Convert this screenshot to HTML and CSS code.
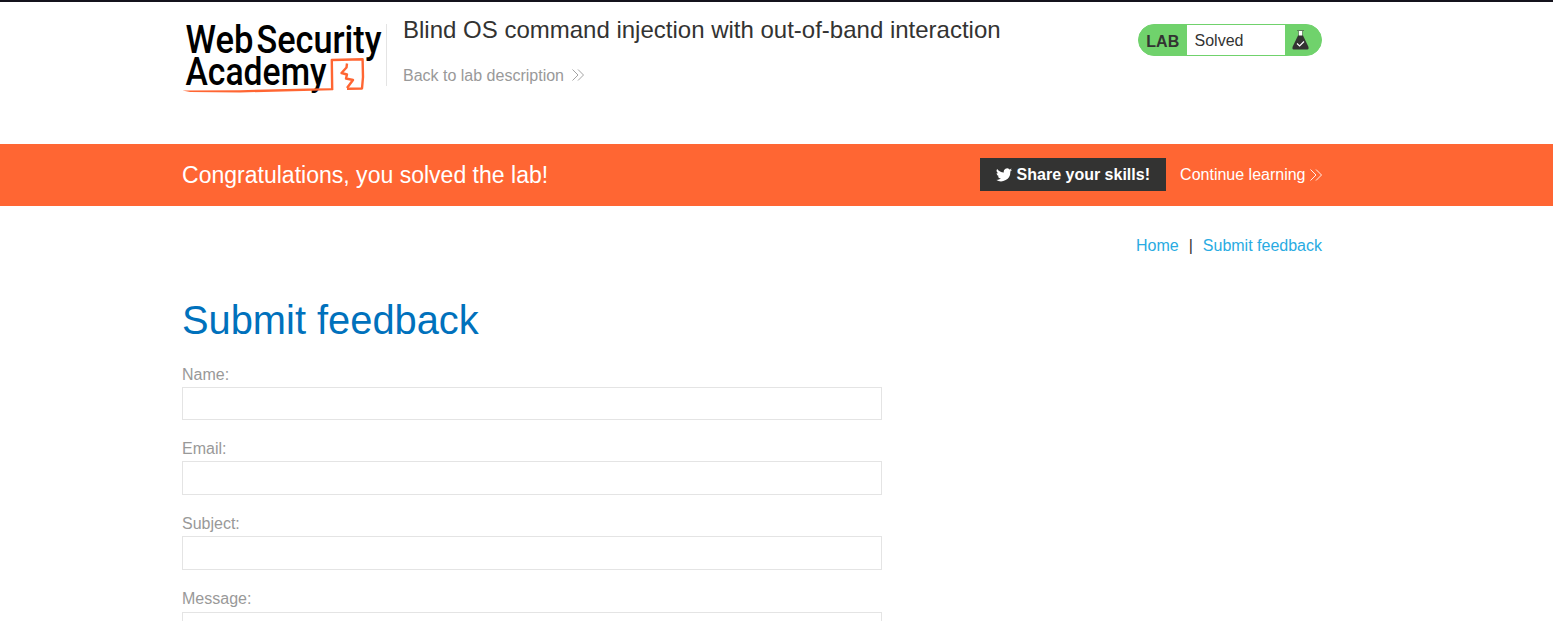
FILE: index.html
```
<!DOCTYPE html>
<html lang="en">
<head>
<meta charset="utf-8">
<title>Blind OS command injection with out-of-band interaction</title>
<link rel="stylesheet" href="styles.css">
</head>
<body>
<header class="lab-header">
  <div class="container header-row">
    <svg class="logo" width="204" height="80" viewBox="182 20 204 80">
      <g class="logo-text">
        <text x="185.500" y="52.800" textLength="68" lengthAdjust="spacingAndGlyphs">Web</text>
        <text x="256.500" y="52.800" textLength="125" lengthAdjust="spacingAndGlyphs">Security</text>
        <text x="185.500" y="85.300" textLength="141" lengthAdjust="spacingAndGlyphs">Academy</text>
      </g>
      <g fill="none" stroke="#ff6633" stroke-linejoin="round">
        <path stroke-width="2.400" d="M332.200 90L331.800 60L362.600 59.300L363 77L362 88.500L347 88.700"/>
        <path stroke-width="2.400" d="M347 63.500L346.500 67.500L341.500 73L347 74.500L346 78.500L353 80L347 88"/>
      </g>
      <path fill="#ff6633" d="M182.500 90.500L240 90.200L308 88.600L333 88.300V90.300L240 92.500L190 92Z"/>
    </svg>
    <div class="title-block">
      <h2>Blind OS command injection with out-of-band interaction</h2>
      <a class="back">Back to lab description
        <svg width="12" height="12" viewBox="0 0 12 12"><path d="M.5.500L6 6L.5 11.500M6 .5L11.500 6L6 11.500"/></svg>
      </a>
    </div>
    <div class="lab-status">
      <span class="lab-tag">LAB</span>
      <span class="lab-state">Solved</span>
      <svg class="flask" width="18" height="22" viewBox="0 0 18 22">
        <path fill="#fff" d="M6.500 2h4v5h-4z"/>
        <path fill="#5c805a" d="M5 1h7v1H5zM6 2h.8v5H6zM10.200 2h.8v5h-.8z"/>
        <path fill="#333332" d="M6 6.500h5L16.500 18q.5 2.500-1 2.500h-14Q0 20.500.500 18Z"/>
        <path fill="none" stroke="#fff" stroke-width="1.200" d="M5 14.500L7.600 17L12 12.500"/>
      </svg>
    </div>
  </div>
</header>
<section class="banner">
  <div class="container banner-row">
    <h4>Congratulations, you solved the lab!</h4>
    <div class="banner-actions">
      <a class="share">
        <svg width="16" height="14" viewBox="0 0 24 20"><path fill="#fff" d="M24 2.300a9.800 9.800 0 0 1-2.800.8A5 5 0 0 0 23.300.4a10 10 0 0 1-3.100 1.200 4.900 4.900 0 0 0-8.400 4.500A14 14 0 0 1 1.700.9a4.900 4.900 0 0 0 1.500 6.600 4.900 4.900 0 0 1-2.200-.6 4.900 4.900 0 0 0 4 4.900 5 5 0 0 1-2.300.1 4.900 4.900 0 0 0 4.600 3.400A9.900 9.900 0 0 1 0 17.300 14 14 0 0 0 21.500 4.800 10 10 0 0 0 24 2.300Z"/></svg>
        <span>Share your skills!</span>
      </a>
      <a class="continue">Continue learning
        <svg width="12" height="12" viewBox="0 0 12 12"><path d="M.5.500L6 6L.5 11.500M6 .5L11.500 6L6 11.500"/></svg>
      </a>
    </div>
  </div>
</section>
<main class="container">
  <nav class="top-links"><a>Home</a><span>|</span><a>Submit feedback</a></nav>
  <h1>Submit feedback</h1>
  <form class="feedback">
    <label>Name:</label><input class="short" type="text">
    <label>Email:</label><input type="text">
    <label>Subject:</label><input type="text">
    <label class="message-label">Message:</label><textarea></textarea>
  </form>
</main>
</body>
</html>
```
FILE: styles.css
```
* { box-sizing: border-box; }
body {
  margin: 0;
  background: #fff;
  color: #333332;
  font: 16px/20px "Liberation Sans", Arial, sans-serif;
}
h1, h2, h4 { margin: 0; font-weight: 400; }
.container { width: 1140px; margin-left: 182px; }
.lab-header { height: 144px; border-top: 2px solid #14131c; }
.header-row { display: flex; align-items: flex-start; }
.logo { flex: none; margin-top: 18px; overflow: visible; }
.logo-text { font: 500 38px Roboto, sans-serif; fill: #000; }
.title-block {
  height: 62px;
  margin-top: 22px;
  padding-left: 16px;
  border-left: 1px solid #e4e4e4;
}
.title-block h2 { margin-top: -10px; font-size: 24px; line-height: 32px; white-space: nowrap; }
.back { display: flex; align-items: center; gap: 8.5px; margin-top: 20px; color: #999; }
.back svg, .continue svg { fill: none; stroke: currentColor; stroke-width: .9; }
.back svg { margin-top: -2px; }
.lab-status {
  display: flex;
  width: 184px;
  height: 32px;
  margin: 22px 0 0 auto;
  border: 1px solid #70d26c;
  border-radius: 16px;
  background: #70d26c;
  overflow: hidden;
}
.lab-tag { width: 48px; padding-left: 7.3px; font-weight: 700; line-height: 33px; }
.lab-state { width: 98px; padding-left: 7.5px; background: #fff; line-height: 31px; }
.flask { margin: 4px 0 0 6.5px; }
.banner { height: 62px; background: #ff6633; color: #fff; }
.banner-row { display: flex; align-items: flex-start; justify-content: space-between; }
.banner h4 { font-size: 23.04px; line-height: 62px; }
.banner-actions { display: flex; align-items: center; gap: 14px; margin-top: 14px; }
.share {
  display: flex;
  align-items: center;
  width: 186px;
  height: 33px;
  padding-left: 16px;
  gap: 4.5px;
  background: #333332;
  font-weight: 700;
  white-space: nowrap;
}
.continue { display: flex; align-items: center; gap: 4.5px; }
.top-links { display: flex; justify-content: flex-end; padding-top: 30px; color: #29abe2; }
.top-links span { margin: 0 10px; color: #333332; }
h1 { margin-top: 40px; color: #0071bc; font-size: 39.85px; line-height: 48px; }
.feedback { display: flex; flex-direction: column; width: 700px; height: 263px; margin-top: 20px; overflow: hidden; }
.feedback label { flex: none; height: 23px; padding-top: 1px; color: #999; line-height: 20px; }
.feedback input, .feedback textarea {
  flex: none;
  width: 700px;
  height: 34px;
  margin: 0 0 18px;
  padding: 5px;
  border: 1px solid #e4e4e4;
  border-radius: 0;
  background: #fff;
}
.feedback .short { height: 33px; }
.feedback .message-label { height: 24px; }
.feedback textarea { height: 200px; resize: none; }
```
